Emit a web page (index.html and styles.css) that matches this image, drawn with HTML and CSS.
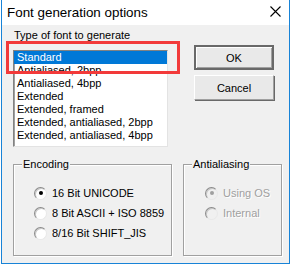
FILE: index.html
```html
<!DOCTYPE html>
<html lang="en">
<head>
    <meta charset="UTF-8">
    <title>Font generation options</title>
    <link rel="stylesheet" href="styles.css">
</head>
<body>
    <div class="window">
        <div class="titlebar">
            <span class="title">Font generation options</span>
            <svg class="close" width="11" height="11" viewBox="0 0 11 11">
                <path d="M0.5 0.5 L10.5 10.5 M10.5 0.5 L0.5 10.5" stroke="#000" stroke-width="1.1" fill="none"/>
            </svg>
        </div>

        <div class="content">
            <div class="top-row">
                <div class="list-col">
                    <div class="caption">Type of font to generate</div>
                    <div class="listbox">
                        <div class="item selected">Standard</div>
                        <div class="item">Antialiased, 2bpp</div>
                        <div class="item">Antialiased, 4bpp</div>
                        <div class="item">Extended</div>
                        <div class="item">Extended, framed</div>
                        <div class="item">Extended, antialiased, 2bpp</div>
                        <div class="item">Extended, antialiased, 4bpp</div>
                    </div>
                    <!-- annotation drawn over the list -->
                    <div class="highlight"></div>
                </div>
                <div class="buttons">
                    <button class="btn default">OK</button>
                    <button class="btn">Cancel</button>
                </div>
            </div>

            <div class="groups">
                <div class="group encoding">
                    <span class="legend">Encoding</span>
                    <div class="radio-row"><span class="radio checked"></span>16 Bit UNICODE</div>
                    <div class="radio-row"><span class="radio"></span>8 Bit ASCII + ISO 8859</div>
                    <div class="radio-row"><span class="radio"></span>8/16 Bit SHIFT_JIS</div>
                </div>
                <div class="group antialias">
                    <span class="legend">Antialiasing</span>
                    <div class="radio-row disabled"><span class="radio checked"></span>Using OS</div>
                    <div class="radio-row disabled"><span class="radio"></span>Internal</div>
                </div>
            </div>
        </div>
    </div>
</body>
</html>
```

FILE: styles.css
```css
body {
    margin: 0;
    background-color: #fff;
    font-family: "Liberation Sans", Arial, sans-serif;
    font-size: 11px;
    color: #000;
}

.window {
    margin-left: 1px;
    width: 289px;
    height: 264px;
    box-sizing: border-box;
    border: 1px solid #1883d7;
    border-top: none;
    background-color: #f0f0f0;
}

.titlebar {
    height: 25px;
    background-color: #fff;
    display: flex;
    align-items: center;
    justify-content: space-between;
    padding: 0 8px 0 5px;
}

.title {
    font-size: 13.4px;
    margin-top: -1px;
}

.close {
    margin-top: -2px;
}

.content {
    padding: 4px 0 0 11px;
}

.top-row {
    display: flex;
}

.list-col {
    width: 155px;
    position: relative;
}

.caption {
    height: 13px;
    line-height: 13px;
    margin-left: 1px;
}

.listbox {
    margin-top: 8px;
    height: 97px;
    box-sizing: border-box;
    background-color: #fff;
    border: 1px solid;
    border-color: #828282 #e3e3e3 #e3e3e3 #828282;
    box-shadow: inset 1px 1px #a0a0a0;
}

.item {
    height: 13px;
    line-height: 13px;
    padding-left: 3px;
    white-space: nowrap;
}

.item.selected {
    background-color: #0078d7;
    color: #fff;
}

.highlight {
    position: absolute;
    left: -7px;
    top: 12px;
    width: 168px;
    height: 27px;
    border: 3px solid #f23a3a;
}

.buttons {
    margin-left: 26px;
    margin-top: 16px;
    display: flex;
    flex-direction: column;
    gap: 5px;
}

.btn {
    width: 80px;
    height: 25px;
    font-family: "Liberation Sans", Arial, sans-serif;
    font-size: 11px;
    background-color: #e9e9e9;
    border: 1px solid;
    border-color: #fff #a0a0a0 #a0a0a0 #fff;
    box-shadow: 1px 1px #696969;
    padding: 0;
}

.btn.default {
    border: 2px solid #696969;
    box-shadow: inset 1px 1px #fff, inset -1px -1px #a0a0a0;
}

.groups {
    display: flex;
    gap: 11px;
    margin-top: 17px;
}

.group {
    position: relative;
    height: 92px;
    box-sizing: border-box;
    border: 1px solid #a0a0a0;
    box-shadow: inset 1px 1px #fff, 1px 1px #fff;
    padding-top: 18px;
}

.encoding {
    width: 159px;
    padding-left: 20px;
}

.antialias {
    width: 99px;
    padding-left: 21px;
}

.legend {
    position: absolute;
    top: -7px;
    left: 8px;
    padding: 0 1px;
    line-height: 13px;
    background-color: #f0f0f0;
}

.radio-row {
    height: 20px;
    display: flex;
    align-items: center;
    gap: 5px;
}

.radio {
    width: 13px;
    height: 13px;
    box-sizing: border-box;
    border-radius: 50%;
    background-color: #fff;
    border: 1px solid;
    border-color: #8a8a8a #e8e8e8 #e8e8e8 #8a8a8a;
    box-shadow: inset 1px 1px #c8c8c8;
    display: flex;
    align-items: center;
    justify-content: center;
}

.radio.checked::after {
    content: "";
    width: 4px;
    height: 4px;
    border-radius: 50%;
    background-color: #000;
}

.disabled {
    color: #a0a0a0;
    text-shadow: 1px 1px #fff;
}

.disabled .radio {
    background-color: #f0f0f0;
}

.disabled .radio.checked::after {
    background-color: #a0a0a0;
}
```
